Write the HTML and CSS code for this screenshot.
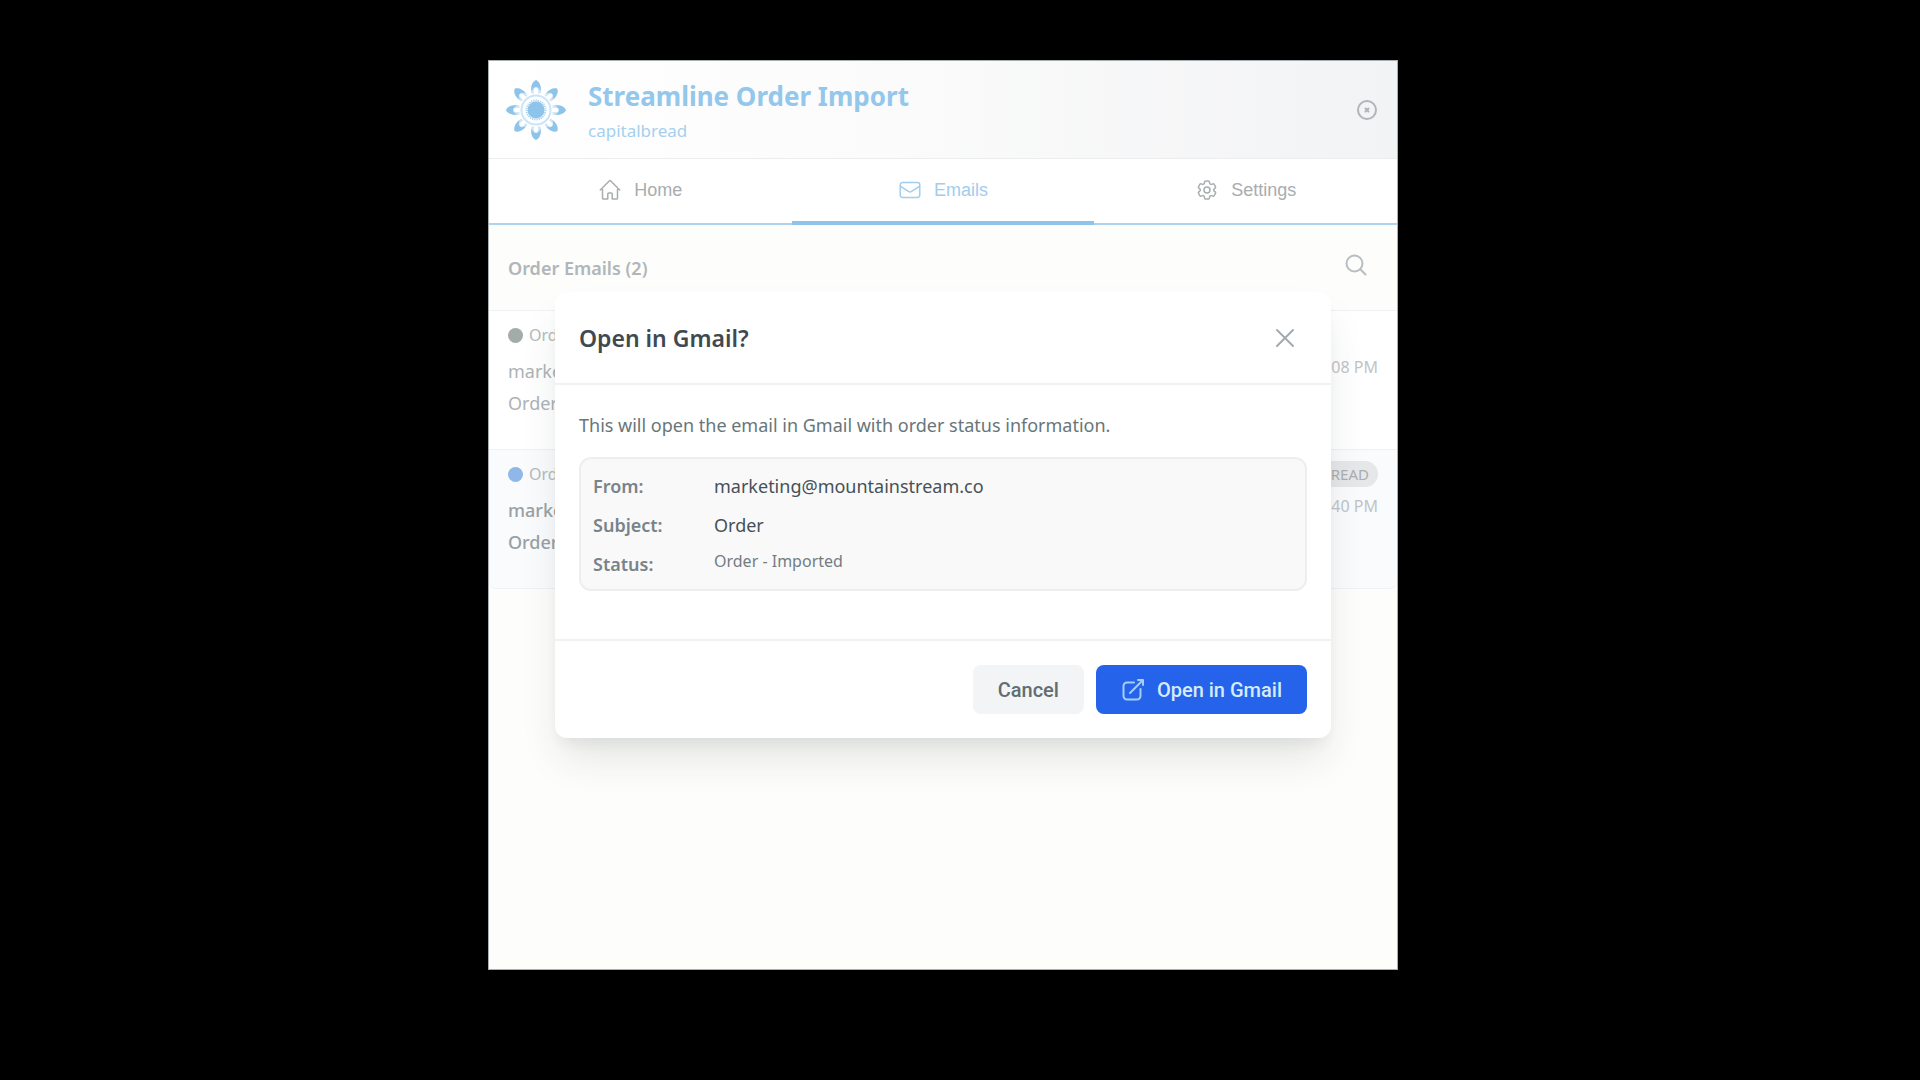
FILE: index.html
```html
<!DOCTYPE html>
<html lang="en">
<head>
    <meta charset="UTF-8">
    <meta name="viewport" content="width=device-width, initial-scale=1.0">
    <title>Streamline Order Import</title>
    <link rel="stylesheet" href="styles.css">
</head>
<body>
    <div class="app">
        <!-- Header -->
        <header class="header">
            <svg class="logo" viewBox="0 0 62 62" aria-hidden="true">
                <defs>
                    <g id="petal">
                        <path d="M31 1C35 3 36.500 8 35.500 14.500H26.500C25.500 8 27 3 31 1Z" fill="#cfe6f6"/>
                        <path d="M31 1C34.500 2.500 36.500 7 35.500 12.500C34.500 10 33 8 31 8C29 8 27.500 10 26.500 12.500C25.500 7 27.500 2.500 31 1Z" fill="#8fc4ea"/>
                        <ellipse cx="31" cy="12.500" rx="2.200" ry="4" fill="#fff"/>
                    </g>
                </defs>
                <use href="#petal"/>
                <use href="#petal" transform="rotate(45 31 31)"/>
                <use href="#petal" transform="rotate(90 31 31)"/>
                <use href="#petal" transform="rotate(135 31 31)"/>
                <use href="#petal" transform="rotate(180 31 31)"/>
                <use href="#petal" transform="rotate(225 31 31)"/>
                <use href="#petal" transform="rotate(270 31 31)"/>
                <use href="#petal" transform="rotate(315 31 31)"/>
                <circle cx="31" cy="31" r="14.500" fill="#fff" stroke="#cbe5f6" stroke-width="2"/>
                <circle cx="31" cy="31" r="9.500" fill="none" stroke="#a9d2ef" stroke-width="2" stroke-dasharray="1.200 1"/>
                <circle cx="31" cy="31" r="8.500" fill="#8fc4ea"/>
            </svg>
            <div class="header-text">
                <h1>Streamline Order Import</h1>
                <p>capitalbread</p>
            </div>
            <button type="button" class="icon-btn" aria-label="Disconnect">
                <svg width="22" height="22" viewBox="0 0 22 22" fill="none" stroke="#b0b5b7" stroke-width="2" stroke-linecap="round">
                    <circle cx="11" cy="11" r="9"/>
                    <path d="M9.500 9.500l3 3M12.500 9.500l-3 3"/>
                </svg>
            </button>
        </header>

        <!-- Tabs -->
        <nav class="tabs">
            <a class="tab" href="#home">
                <svg width="24" height="24" viewBox="0 0 24 24" fill="none" stroke="currentColor" stroke-width="1.500" stroke-linecap="round" stroke-linejoin="round">
                    <path d="M2.250 12l8.954-8.955a1.126 1.126 0 0 1 1.591 0L21.750 12M4.500 9.750v10.125c0 .621.504 1.125 1.125 1.125H9.750v-4.875c0-.621.504-1.125 1.125-1.125h2.250c.621 0 1.125.504 1.125 1.125V21h4.125c.621 0 1.125-.504 1.125-1.125V9.750"/>
                </svg>
                Home
            </a>
            <a class="tab active" href="#emails">
                <svg width="24" height="24" viewBox="0 0 24 24" fill="none" stroke="currentColor" stroke-width="1.500" stroke-linecap="round" stroke-linejoin="round">
                    <path d="M21.750 6.750v10.500a2.250 2.250 0 0 1-2.250 2.250h-15a2.250 2.250 0 0 1-2.250-2.250V6.750m19.500 0A2.250 2.250 0 0 0 19.500 4.500h-15a2.250 2.250 0 0 0-2.250 2.250m19.500 0v.243a2.250 2.250 0 0 1-1.070 1.916l-7.500 4.615a2.250 2.250 0 0 1-2.360 0L3.320 8.910a2.250 2.250 0 0 1-1.070-1.916V6.750"/>
                </svg>
                Emails
            </a>
            <a class="tab" href="#settings">
                <svg width="24" height="24" viewBox="0 0 24 24" fill="none" stroke="currentColor" stroke-width="1.500" stroke-linecap="round" stroke-linejoin="round">
                    <path d="M9.594 3.940c.090-.542.560-.940 1.110-.940h2.593c.550 0 1.020.398 1.110.940l.213 1.281c.063.374.313.686.645.870.074.040.147.083.220.127.324.196.720.257 1.075.124l1.217-.456a1.125 1.125 0 0 1 1.370.490l1.296 2.247a1.125 1.125 0 0 1-.260 1.431l-1.003.827c-.293.240-.438.613-.431.992a6.759 6.759 0 0 1 0 .255c-.007.378.138.750.430.990l1.005.828c.424.350.534.954.260 1.430l-1.298 2.247a1.125 1.125 0 0 1-1.369.491l-1.217-.456c-.355-.133-.750-.072-1.076.124a6.570 6.570 0 0 1-.220.128c-.331.183-.581.495-.644.869l-.213 1.280c-.090.543-.560.941-1.110.941h-2.594c-.550 0-1.020-.398-1.110-.940l-.213-1.281c-.062-.374-.312-.686-.644-.870a6.520 6.520 0 0 1-.220-.127c-.325-.196-.720-.257-1.076-.124l-1.217.456a1.125 1.125 0 0 1-1.369-.490l-1.297-2.247a1.125 1.125 0 0 1 .260-1.431l1.004-.827c.292-.240.437-.613.430-.992a6.932 6.932 0 0 1 0-.255c.007-.378-.138-.750-.430-.990l-1.004-.828a1.125 1.125 0 0 1-.260-1.430l1.297-2.247a1.125 1.125 0 0 1 1.370-.491l1.216.456c.356.133.751.072 1.076-.124.072-.044.146-.087.220-.128.332-.183.582-.495.644-.869l.214-1.281Z"/>
                    <circle cx="12" cy="12" r="3"/>
                </svg>
                Settings
            </a>
        </nav>

        <!-- Email list -->
        <main class="emails">
            <div class="toolbar">
                <h2>Order Emails (2)</h2>
                <button type="button" class="icon-btn search-btn" aria-label="Search">
                    <svg width="22" height="22" viewBox="0 0 22 22" fill="none" stroke="#b8bdc1" stroke-width="2" stroke-linecap="round">
                        <circle cx="9.500" cy="9.500" r="8"/>
                        <path d="M15.500 15.500l5 5"/>
                    </svg>
                </button>
            </div>
            <ul class="email-list">
                <li class="email">
                    <div class="email-info">
                        <div class="email-status"><span class="dot"></span>Order</div>
                        <div class="email-line">marketing</div>
                        <div class="email-line">Order</div>
                    </div>
                    <div class="email-meta">
                        <time>1:08 PM</time>
                    </div>
                </li>
                <li class="email unread">
                    <div class="email-info">
                        <div class="email-status"><span class="dot"></span>Order</div>
                        <div class="email-line">marketing</div>
                        <div class="email-line">Order</div>
                    </div>
                    <div class="email-meta">
                        <span class="badge">UNREAD</span>
                        <time>2:40 PM</time>
                    </div>
                </li>
            </ul>
        </main>

        <!-- Open in Gmail dialog -->
        <div class="overlay">
            <div class="modal" role="dialog" aria-labelledby="modal-title">
                <div class="modal-header">
                    <h3 id="modal-title">Open in Gmail?</h3>
                    <button type="button" class="icon-btn" aria-label="Close">
                        <svg width="20" height="20" viewBox="0 0 20 20" fill="none" stroke="#a3aaaf" stroke-width="2" stroke-linecap="round">
                            <path d="M2 2l16 16M18 2L2 18"/>
                        </svg>
                    </button>
                </div>
                <div class="modal-body">
                    <p>This will open the email in Gmail with order status information.</p>
                    <dl class="details">
                        <dt>From:</dt>
                        <dd>marketing@mountainstream.co</dd>
                        <dt>Subject:</dt>
                        <dd>Order</dd>
                        <dt>Status:</dt>
                        <dd class="status">Order - Imported</dd>
                    </dl>
                </div>
                <div class="modal-footer">
                    <button type="button" class="btn btn-cancel">Cancel</button>
                    <button type="button" class="btn btn-open">
                        <svg width="24" height="24" viewBox="0 0 24 24" fill="none" stroke="#a5cdf6" stroke-width="2" stroke-linecap="round" stroke-linejoin="round">
                            <path d="M13 4.500H6A3.500 3.500 0 0 0 2.500 8v10A3.500 3.500 0 0 0 6 21.500h10a3.500 3.500 0 0 0 3.500-3.500v-7"/>
                            <path d="M9 15L22 2M17 2h5v5"/>
                        </svg>
                        Open in Gmail
                    </button>
                </div>
            </div>
        </div>
    </div>
</body>
</html>
```
FILE: styles.css
```css
* {
    box-sizing: border-box;
}
body {
    margin: 0;
    padding: 60px 34px 110px 0;
    min-height: 100vh;
    display: flex;
    justify-content: center;
    background-color: #000;
    font-family: "Noto Sans", "Open Sans", sans-serif;
    font-size: 18px;
}
h1, h2, h3, p, ul, dl, dd {
    margin: 0;
    padding: 0;
}
button {
    border: none;
    padding: 0;
    background: none;
    cursor: pointer;
}
svg {
    display: block;
    flex-shrink: 0;
}
.app {
    position: relative;
    width: 100%;
    max-width: 910px;
    display: flex;
    flex-direction: column;
    overflow: hidden;
    background-color: #fdfdfb;
    border: 1px solid #a9afb0;
}

/* header */
.header {
    display: flex;
    align-items: center;
    gap: 21px;
    height: 98px;
    padding: 4px 19px 4px 16px;
    background: linear-gradient(90deg, #fff, #fbfbfb 45%, #f2f3f5);
    border-bottom: 1px solid #eceeee;
}
.logo {
    width: 62px;
    height: 62px;
}
.header-text {
    flex: 1;
    padding-top: 6px;
}
.header h1 {
    font-size: 26px;
    line-height: 36px;
    font-weight: 700;
    color: #93c7eb;
}
.header p {
    font-size: 17px;
    line-height: 34px;
    color: #a5d0ef;
}

/* tabs */
.tabs {
    display: grid;
    grid-template-columns: repeat(3, 1fr);
    background-color: #fff;
    border-bottom: 2px solid #add3ee;
}
.tab {
    display: flex;
    align-items: center;
    justify-content: center;
    gap: 12px;
    height: 66px;
    margin-bottom: -2px;
    padding-bottom: 4px;
    font-family: "Liberation Sans", Arial, sans-serif;
    font-size: 18px;
    color: #a8adaf;
    text-decoration: none;
}
.tab.active {
    padding-bottom: 0;
    color: #a1cdee;
    border-bottom: 4px solid #8fc4ea;
}

/* email list */
.toolbar {
    display: flex;
    align-items: center;
    justify-content: space-between;
    height: 86px;
    padding: 0 30px 0 19px;
    border-bottom: 1px solid #eff1f4;
}
.toolbar h2 {
    font-size: 18px;
    font-weight: 600;
    color: #b0b6ba;
}
.search-btn {
    padding-bottom: 6px;
}
.email-list {
    list-style: none;
}
.email {
    display: flex;
    justify-content: space-between;
    padding: 10px 19px 30px;
    background-color: #fff;
    border-bottom: 1px solid #eff1f4;
    color: #adb3b6;
}
.email.unread {
    background-color: #fafbfd;
    border-radius: 0 0 8px 8px;
    color: #98a1a5;
}
.email-status {
    display: flex;
    align-items: center;
    gap: 6px;
    margin-bottom: 6px;
    font-size: 16px;
    line-height: 28px;
    color: #b4babd;
}
.dot {
    width: 15px;
    height: 15px;
    border-radius: 50%;
    background-color: #a3abab;
}
.unread .dot {
    background-color: #8fb8e8;
}
.email-line {
    font-size: 18px;
    line-height: 32px;
}
.unread .email-line {
    font-weight: 500;
}
.email-meta {
    display: flex;
    flex-direction: column;
    align-items: flex-end;
    justify-content: flex-end;
    gap: 6px;
    padding-bottom: 39px;
    font-size: 16px;
    line-height: 26px;
    color: #bfc4c7;
}
.badge {
    padding: 0 9px;
    border-radius: 13px;
    background-color: #e6e7e8;
    font-size: 15px;
    color: #a9afb2;
}

/* modal */
.overlay {
    position: absolute;
    inset: 0;
    display: flex;
    align-items: center;
    justify-content: center;
    padding: 0 66px;
}
.modal {
    width: 100%;
    background-color: #fff;
    border-radius: 12px;
    box-shadow: 0 24px 40px -6px rgba(40, 55, 60, 0.12), 0 10px 14px -6px rgba(40, 55, 60, 0.08);
}
.modal-header {
    display: flex;
    align-items: center;
    justify-content: space-between;
    height: 93px;
    padding: 0 36px 0 24px;
    border-bottom: 2px solid #f0f1f2;
}
.modal-header h3 {
    font-size: 23px;
    font-weight: 600;
    color: #3f4a50;
}
.modal-body {
    padding: 25px 24px 48px;
}
.modal-body p {
    margin-bottom: 17px;
    line-height: 30px;
    color: #68767a;
}
.details {
    display: grid;
    grid-template-columns: 108px 1fr;
    column-gap: 13px;
    padding: 8px 12px 5px;
    background-color: #f9f9fa;
    border: 2px solid #eceeef;
    border-radius: 12px;
    line-height: 39px;
}
.details dt {
    font-weight: 600;
    color: #78838a;
}
.details dd {
    color: #465157;
}
.details .status {
    font-size: 16px;
    line-height: 32px;
    color: #727d81;
}
.modal-footer {
    display: flex;
    justify-content: flex-end;
    gap: 12px;
    padding: 24px;
    border-top: 2px solid #f0f1f2;
}
.btn {
    display: flex;
    align-items: center;
    gap: 12px;
    height: 49px;
    padding: 0 25px;
    border-radius: 8px;
    font-family: Roboto, Arial, sans-serif;
    font-size: 20px;
    font-weight: 500;
}
.btn-cancel {
    background-color: #f3f4f6;
    color: #626d70;
}
.btn-open {
    background-color: #2563eb;
    color: #d4ecfb;
}
```
